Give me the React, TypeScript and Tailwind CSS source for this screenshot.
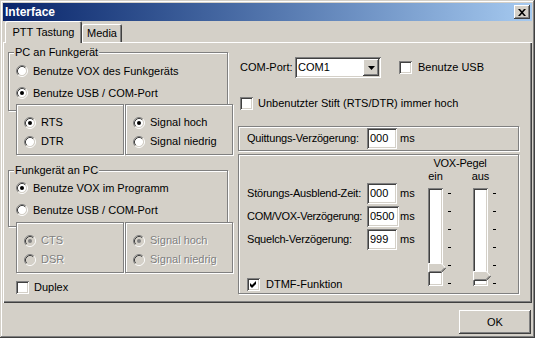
import React from "react";

const FONT = "font-['Liberation_Sans',Arial,sans-serif]";
const SUNKEN =
  "shadow-[inset_1px_1px_0_#808080,inset_-1px_-1px_0_#ffffff,inset_2px_2px_0_#404040,inset_-2px_-2px_0_#d4d0c8]";
const RAISED =
  "shadow-[inset_-1px_-1px_0_#404040,inset_1px_1px_0_#ffffff,inset_-2px_-2px_0_#808080,inset_2px_2px_0_#d4d0c8]";
const ETCHED = "border border-[#808080] shadow-[inset_1px_1px_0_#ffffff,1px_1px_0_#ffffff]";

function Radio({ checked = false, disabled = false }: { checked?: boolean; disabled?: boolean }) {
  return (
    <svg width="12" height="12" viewBox="0 0 12 12" className="shrink-0">
      <circle cx="6" cy="6" r="4.2" fill={disabled ? "#d4d0c8" : "#ffffff"} />
      <path d="M2.11 9.89 A5.5 5.5 0 0 1 9.89 2.11" fill="none" stroke="#808080" />
      <path d="M9.89 2.11 A5.5 5.5 0 0 1 2.11 9.89" fill="none" stroke="#ffffff" />
      <path d="M2.82 9.18 A4.5 4.5 0 0 1 9.18 2.82" fill="none" stroke="#404040" />
      <path d="M9.18 2.82 A4.5 4.5 0 0 1 2.82 9.18" fill="none" stroke="#d4d0c8" />
      {checked && <circle cx="6" cy="6" r="2" fill={disabled ? "#808080" : "#000000"} />}
    </svg>
  );
}

function Check({ checked = false }: { checked?: boolean }) {
  return (
    <span className={`relative block h-[13px] w-[13px] shrink-0 bg-white ${SUNKEN}`}>
      {checked && (
        <svg width="13" height="13" viewBox="0 0 13 13" className="absolute left-0 top-0">
          <polygon points="3,5 5,7 9,3 9,6 5,10 3,8" fill="#000000" />
        </svg>
      )}
    </span>
  );
}

function RadioRow({
  label,
  checked = false,
  disabled = false,
  tall = false,
}: {
  label: string;
  checked?: boolean;
  disabled?: boolean;
  tall?: boolean;
}) {
  return (
    <div className={`flex items-center gap-[5px] ${tall ? "h-[22px]" : "h-[19px]"}`}>
      <Radio checked={checked} disabled={disabled} />
      <span
        className={`whitespace-nowrap ${disabled ? "text-[#808080] [text-shadow:1px_1px_0_#ffffff]" : ""}`}
      >
        {label}
      </span>
    </div>
  );
}

function SubBox({ children }: { children: React.ReactNode }) {
  return (
    <div className={`flex h-[51px] w-[108px] flex-col bg-[#d4d0c8] pl-[7px] pt-[8px] ${ETCHED}`}>
      {children}
    </div>
  );
}

function Thumb({ top }: { top: string }) {
  return (
    <svg width="19" height="10" viewBox="0 0 19 10" className={`absolute left-0 ${top}`}>
      <polygon points="0,0 13,0 18,5 13,10 0,10" fill="#d4d0c8" />
      <path d="M0.5 9.5 V0.5 H13.2 L17.5 4.8" fill="none" stroke="#ffffff" />
      <path d="M1.5 8.5 H13 L16.5 5" fill="none" stroke="#808080" />
      <path d="M0.5 9.5 H13.2 L17.8 5" fill="none" stroke="#404040" />
    </svg>
  );
}

function Slider({ label, thumbTop }: { label: string; thumbTop: string }) {
  return (
    <div className="flex w-[45px] flex-col">
      <div className="flex h-[13px] w-[15px] justify-center whitespace-nowrap">{label}</div>
      <div className="mt-[5px] flex">
        <div className={`relative h-[98px] w-[15px] bg-white ${SUNKEN}`}>
          <Thumb top={thumbTop} />
        </div>
        <div className="ml-[5px] flex flex-col gap-[17px] pt-[5px]">
          {[0, 1, 2, 3, 4, 5].map((i) => (
            <div key={i} className="h-[1px] w-[3px] bg-black" />
          ))}
        </div>
      </div>
    </div>
  );
}

function NumField({ value, w }: { value: string; w: string }) {
  return (
    <div className={`flex h-[21px] ${w} items-center bg-white pl-[3px] ${SUNKEN}`}>{value}</div>
  );
}

export default function App() {
  return (
    <div
      className={`${FONT} flex h-[338px] w-[535px] flex-col bg-[#d4d0c8] p-[3px] text-[11px] leading-[13px] text-black shadow-[inset_-1px_-1px_0_#404040,inset_1px_1px_0_#d4d0c8,inset_-2px_-2px_0_#808080,inset_2px_2px_0_#ffffff]`}
    >
      {/* Title bar */}
      <div className="flex h-[18px] shrink-0 items-center justify-between bg-linear-to-r from-[#0a246a] to-[#a6caf0] pl-[2px] pr-[2px]">
        <span className="text-[12px] font-bold text-white">Interface</span>
        <div className={`flex h-[14px] w-[16px] items-center justify-center bg-[#d4d0c8] ${RAISED}`}>
          <svg width="8" height="7" viewBox="0 0 8 7">
            <path d="M0 0 H2 L4 2.3 L6 0 H8 L5 3.5 L8 7 H6 L4 4.7 L2 7 H0 L3 3.5 Z" fill="#000000" />
          </svg>
        </div>
      </div>

      {/* Tabs */}
      <div className="flex h-[21px] shrink-0 items-end pl-[2px]">
        <div className="relative z-10 -mb-px flex h-[22px] w-[77px] items-center justify-center rounded-t-[2px] bg-[#d4d0c8] shadow-[inset_1px_1px_0_#ffffff,inset_-1px_0_0_#404040,inset_-2px_0_0_#808080]">
          PTT Tastung
        </div>
        <div className="flex h-[18px] w-[40px] items-center justify-center rounded-t-[2px] pt-[1px] shadow-[inset_1px_1px_0_#ffffff,inset_-1px_0_0_#404040,inset_-2px_0_0_#808080]">
          Media
        </div>
      </div>

      {/* Tab panel */}
      <div className="flex h-[261px] shrink-0 gap-[5px] pl-[5px] shadow-[inset_1px_1px_0_#ffffff,inset_-1px_-1px_0_#404040,inset_-2px_-2px_0_#808080]">
        {/* Left column */}
        <div className="flex w-[225px] flex-col">
          <fieldset className={`mt-[4px] w-[220px] min-w-0 pb-[6px] ${ETCHED}`}>
            <legend className="ml-[5px] bg-[#d4d0c8] px-[1px] leading-[13px]">PC an Funkgerät</legend>
            <div className="flex flex-col pl-[7px] pt-[1px]">
              <RadioRow tall label="Benutze VOX des Funkgeräts" />
              <RadioRow tall checked label="Benutze USB / COM-Port" />
            </div>
          </fieldset>
          <div className="relative -mt-[7px] ml-[8px] flex gap-[1px]">
            <SubBox>
              <RadioRow checked label="RTS" />
              <RadioRow label="DTR" />
            </SubBox>
            <SubBox>
              <RadioRow checked label="Signal hoch" />
              <RadioRow label="Signal niedrig" />
            </SubBox>
          </div>

          <fieldset className={`mt-[9px] w-[220px] min-w-0 pb-[5px] ${ETCHED}`}>
            <legend className="ml-[5px] bg-[#d4d0c8] px-[1px] leading-[13px]">Funkgerät an PC</legend>
            <div className="flex flex-col pl-[7px]">
              <RadioRow tall checked label="Benutze VOX im Programm" />
              <RadioRow tall label="Benutze USB / COM-Port" />
            </div>
          </fieldset>
          <div className="relative -mt-[5px] ml-[8px] flex gap-[1px]">
            <SubBox>
              <RadioRow disabled checked label="CTS" />
              <RadioRow disabled label="DSR" />
            </SubBox>
            <SubBox>
              <RadioRow disabled checked label="Signal hoch" />
              <RadioRow disabled label="Signal niedrig" />
            </SubBox>
          </div>

          <div className="ml-[8px] mt-[8px] flex h-[13px] items-center gap-[5px]">
            <Check />
            <span>Duplex</span>
          </div>
        </div>

        {/* Right column */}
        <div className="flex w-[282px] flex-col">
          <div className="mt-[15px] flex h-[21px] items-center pl-[2px]">
            <span className="w-[55px] whitespace-nowrap">COM-Port:</span>
            <div className={`flex h-[21px] w-[86px] items-center justify-between bg-white p-[2px] ${SUNKEN}`}>
              <span className="pl-[1px]">COM1</span>
              <div className={`flex h-[17px] w-[16px] items-center justify-center bg-[#d4d0c8] ${RAISED}`}>
                <svg width="7" height="4" viewBox="0 0 7 4">
                  <polygon points="0,0 7,0 3.5,4" fill="#000000" />
                </svg>
              </div>
            </div>
            <div className="ml-[18px]">
              <Check />
            </div>
            <span className="ml-[6px] whitespace-nowrap">Benutze USB</span>
          </div>

          <div className="mt-[19px] flex h-[13px] items-center gap-[5px] pl-[2px]">
            <Check />
            <span className="whitespace-nowrap">Unbenutzter Stift (RTS/DTR) immer hoch</span>
          </div>

          <div className={`mt-[16px] flex h-[25px] w-[281px] items-center pl-[8px] ${ETCHED}`}>
            <span className="w-[120px] whitespace-nowrap tracking-[-0.2px]">Quittungs-Verzögerung:</span>
            <NumField value="000" w="w-[30px]" />
            <span className="ml-[3px]">ms</span>
          </div>

          <div className={`mt-[3px] flex h-[140px] w-[281px] ${ETCHED}`}>
            <div className="flex w-[193px] flex-col pl-[8px] pt-[27px]">
              <div className="flex h-[23px] items-center">
                <span className="w-[120px] whitespace-nowrap tracking-[-0.2px]">Störungs-Ausblend-Zeit:</span>
                <NumField value="000" w="w-[30px]" />
                <span className="ml-[3px]">ms</span>
              </div>
              <div className="flex h-[23px] items-center">
                <span className="w-[120px] whitespace-nowrap tracking-[-0.3px]">COM/VOX-Verzögerung:</span>
                <NumField value="0500" w="w-[32px]" />
                <span className="ml-[1px]">ms</span>
              </div>
              <div className="flex h-[23px] items-center">
                <span className="w-[120px] whitespace-nowrap tracking-[-0.2px]">Squelch-Verzögerung:</span>
                <NumField value="999" w="w-[30px]" />
                <span className="ml-[3px]">ms</span>
              </div>
              <div className="mt-[27px] flex h-[13px] items-center gap-[6px]">
                <Check checked />
                <span>DTMF-Funktion</span>
              </div>
            </div>
            <div className="flex flex-col pt-[2px]">
              <div className="w-[68px] text-center tracking-[-0.2px]">VOX-Pegel</div>
              <div className="ml-[2px] flex">
                <Slider label="ein" thumbTop="top-[75px]" />
                <Slider label="aus" thumbTop="top-[83px]" />
              </div>
            </div>
          </div>
        </div>
      </div>

      {/* Bottom */}
      <div className="flex justify-end pr-[1px] pt-[7px]">
        <button className={`h-[24px] w-[72px] bg-[#d4d0c8] ${RAISED}`}>OK</button>
      </div>
    </div>
  );
}
